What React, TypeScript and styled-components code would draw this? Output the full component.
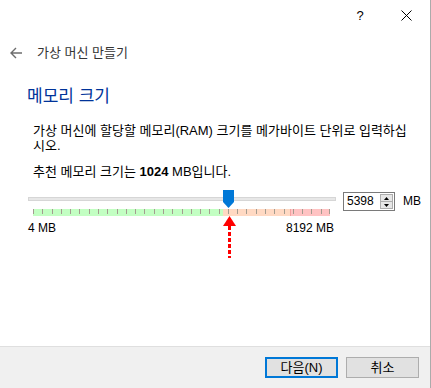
import React from "react";
import styled, { createGlobalStyle } from "styled-components";

const GlobalStyle = createGlobalStyle`
  html, body {
    margin: 0;
    padding: 0;
    background: #fff;
  }
  body {
    font-family: "Liberation Sans", "Noto Sans CJK KR", sans-serif;
    font-size: 13px;
    color: #000;
  }
  * {
    box-sizing: border-box;
  }
`;

const MIN_MB = 4;
const MAX_MB = 8192;
const VALUE_MB = 5398;
const SCALE_WIDTH = 297;
const SAFE_END = 0.64;
const WARN_END = 0.865;
const TICKS = 32;

const Window = styled.div`
  width: 431px;
  height: 388px;
  display: flex;
  flex-direction: column;
  background: #fff;
  border-right: 1px solid #ababab;
  overflow: hidden;
`;

const TitleBar = styled.div`
  height: 30px;
  display: flex;
  justify-content: flex-end;
  padding-right: 1px;
`;

const CaptionButton = styled.div`
  width: 46px;
  height: 30px;
  display: flex;
  align-items: center;
  justify-content: center;
  font-size: 13px;
  color: #000;
`;

const Header = styled.div`
  height: 18px;
  margin-top: 14px;
  padding-left: 10px;
  display: flex;
  align-items: center;
`;

const HeaderTitle = styled.span`
  margin-left: 15px;
  color: #333;
  line-height: 18px;
`;

const Heading = styled.h1`
  margin: 25px 0 0 27px;
  font-size: 17px;
  line-height: 20px;
  font-weight: normal;
  color: #003399;
`;

const Text = styled.p<{ $gap: number }>`
  margin: ${(p) => p.$gap}px 0 0 33px;
  width: 380px;
  line-height: 15px;
`;

const SliderRow = styled.div`
  display: flex;
  align-items: flex-start;
  margin-top: 11px;
  padding-left: 28px;
  font-size: 12px;
`;

const SliderColumn = styled.div`
  position: relative;
  width: 308px;
`;

const TrackArea = styled.div`
  height: 19px;
  padding-top: 7px;
`;

const Track = styled.div`
  height: 4px;
  background: #e7e7e7;
  border: 1px solid #d6d6d6;
`;

const Thumb = styled.svg`
  position: absolute;
  top: 0;
`;

const Scale = styled.svg`
  display: block;
  margin-left: 5px;
`;

const Labels = styled.div`
  display: flex;
  justify-content: space-between;
  margin-top: 5px;
  padding-right: 2px;
  line-height: 15px;
`;

const Pointer = styled.svg`
  position: absolute;
  top: 26px;
`;

const SpinBox = styled.div`
  display: flex;
  width: 52px;
  height: 19px;
  margin: 2px 0 0 7px;
  border: 1px solid #7a7a7a;
  background: #fff;
`;

const SpinValue = styled.span`
  flex: 1;
  padding-left: 3px;
  line-height: 17px;
`;

const SpinButtons = styled.div`
  width: 14px;
  display: flex;
  flex-direction: column;
  padding: 1px 1px 1px 0;
`;

const SpinArrow = styled.div`
  flex: 1;
  display: flex;
  align-items: center;
  justify-content: center;
  background: #e6e6e6;
  border: 1px solid #adadad;
  & + & {
    border-top: none;
  }
`;

const Unit = styled.span`
  margin: 2px 0 0 8px;
  line-height: 19px;
`;

const Footer = styled.div`
  margin-top: auto;
  height: 42px;
  border-top: 1px solid #dfdfdf;
  background: #f0f0f0;
  display: flex;
  justify-content: flex-end;
  align-items: flex-start;
  gap: 8px;
  padding: 10px 11px 0 0;
`;

const DialogButton = styled.button<{ $primary?: boolean }>`
  width: 73px;
  height: 21px;
  padding: 0;
  background: #e1e1e1;
  border: ${(p) => (p.$primary ? "2px solid #0078d7" : "1px solid #adadad")};
  font: inherit;
  font-size: 13px;
  line-height: 15px;
  color: #000;
`;

function ScaleBar() {
  const safe = Math.round(SAFE_END * SCALE_WIDTH);
  const warn = Math.round(WARN_END * SCALE_WIDTH);
  const ticks = Array.from({ length: TICKS + 1 }, (_, i) =>
    Math.min(SCALE_WIDTH - 1, Math.round((i * SCALE_WIDTH) / TICKS))
  );
  return (
    <Scale width={SCALE_WIDTH} height={7} shapeRendering="crispEdges">
      <rect x={0} y={0} width={safe} height={7} fill="#c3ffc3" />
      <rect x={safe} y={0} width={warn - safe} height={7} fill="#ffd9c3" />
      <rect x={warn} y={0} width={SCALE_WIDTH - warn} height={7} fill="#ffc3c3" />
      <rect x={warn} y={0} width={1} height={7} fill="#f4a0a0" />
      {ticks.map((x, i) => (
        <rect key={i} x={x} y={0} width={1} height={5} fill="#a49c90" />
      ))}
    </Scale>
  );
}

export default function App() {
  const frac = (VALUE_MB - MIN_MB) / (MAX_MB - MIN_MB);
  const center = 5 + frac * SCALE_WIDTH;

  return (
    <>
      <GlobalStyle />
      <Window>
        <TitleBar>
          <CaptionButton>?</CaptionButton>
          <CaptionButton>
            <svg width="11" height="11" viewBox="0 0 11 11">
              <path d="M0.5 0.5 L10.5 10.5 M10.5 0.5 L0.5 10.5" stroke="#000" strokeWidth="1" />
            </svg>
          </CaptionButton>
        </TitleBar>

        <Header>
          <svg width="12" height="12" viewBox="0 0 12 12">
            <path d="M1 6 H12 M6 1 L1 6 L6 11" stroke="#6d6d6d" strokeWidth="1.4" fill="none" />
          </svg>
          <HeaderTitle>가상 머신 만들기</HeaderTitle>
        </Header>

        <Heading>메모리 크기</Heading>
        <Text $gap={16}>
          가상 머신에 할당할 메모리(RAM) 크기를 메가바이트 단위로 입력하십시오.
        </Text>
        <Text $gap={11}>
          추천 메모리 크기는 <b>1024</b> MB입니다.
        </Text>

        <SliderRow>
          <SliderColumn>
            <TrackArea>
              <Track />
            </TrackArea>
            <Thumb width="11" height="18" viewBox="0 0 11 18" style={{ left: center - 5.5 }}>
              <path d="M0 0 H11 V12 L5.5 18 L0 12 Z" fill="#0078d7" />
            </Thumb>
            <ScaleBar />
            <Labels>
              <span>{MIN_MB} MB</span>
              <span>{MAX_MB} MB</span>
            </Labels>
            <Pointer width="13" height="42" viewBox="0 0 13 42" style={{ left: center - 6 }}>
              <path d="M6.5 0 L13 10 L0 10 Z" fill="#ff0000" />
              <line x1="6.5" y1="10" x2="6.5" y2="42" stroke="#ff0000" strokeWidth="3" strokeDasharray="4 2" />
            </Pointer>
          </SliderColumn>
          <SpinBox>
            <SpinValue>{VALUE_MB}</SpinValue>
            <SpinButtons>
              <SpinArrow>
                <svg width="5" height="3" viewBox="0 0 5 3">
                  <path d="M2.5 0 L5 3 H0 Z" fill="#000" />
                </svg>
              </SpinArrow>
              <SpinArrow>
                <svg width="5" height="3" viewBox="0 0 5 3">
                  <path d="M0 0 H5 L2.5 3 Z" fill="#000" />
                </svg>
              </SpinArrow>
            </SpinButtons>
          </SpinBox>
          <Unit>MB</Unit>
        </SliderRow>

        <Footer>
          <DialogButton $primary>다음(N)</DialogButton>
          <DialogButton>취소</DialogButton>
        </Footer>
      </Window>
    </>
  );
}
